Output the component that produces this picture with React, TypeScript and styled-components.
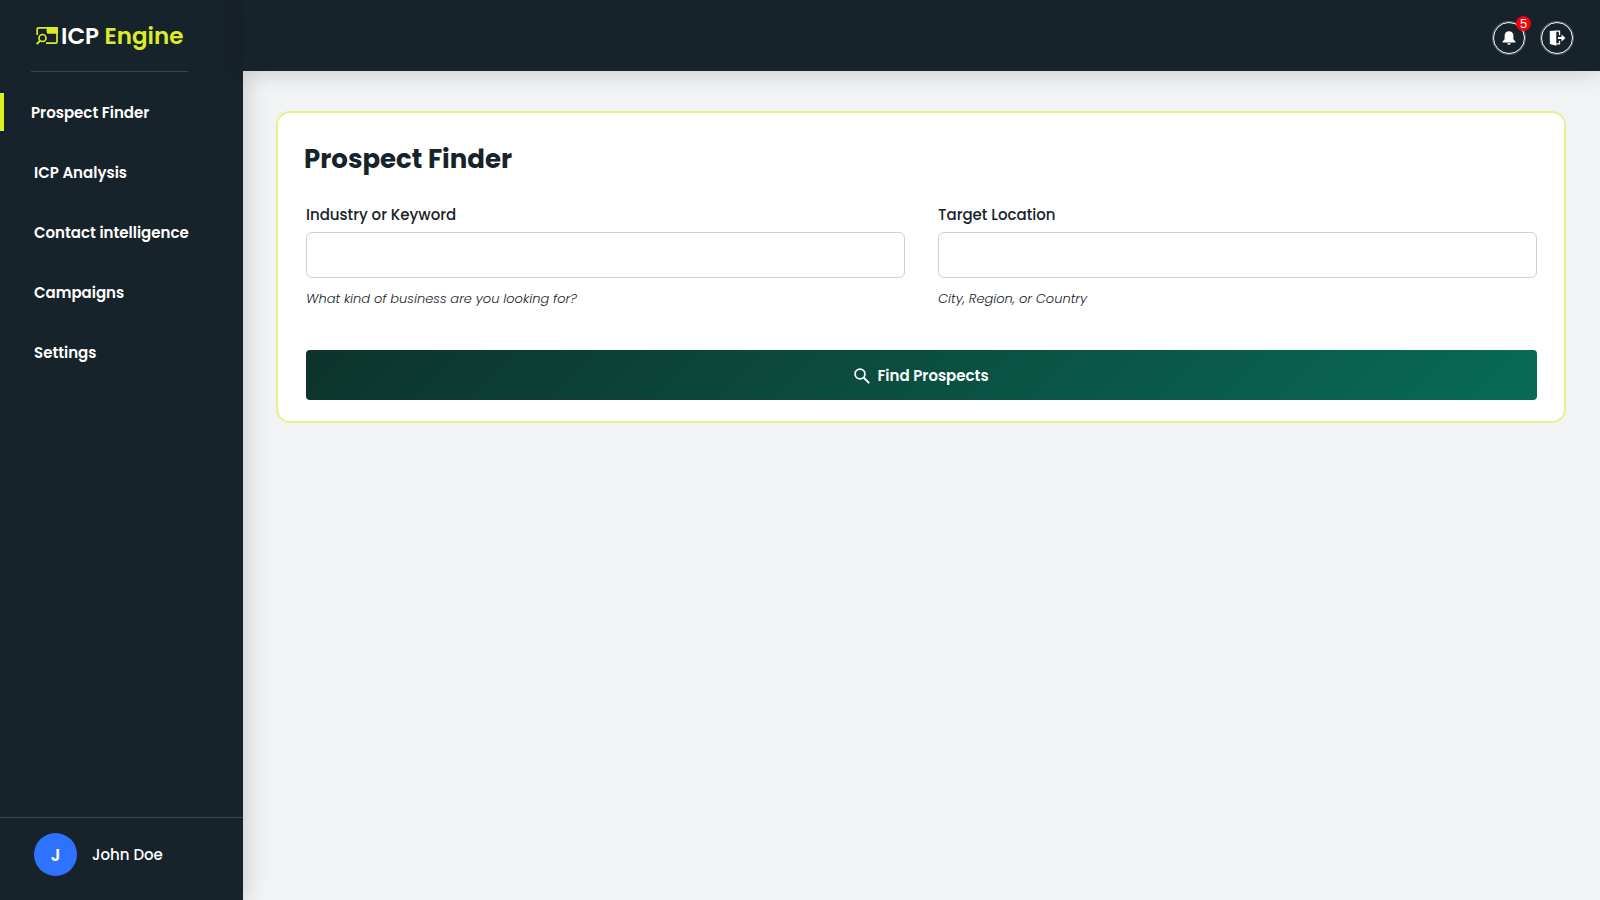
import React from "react";
import styled, { createGlobalStyle } from "styled-components";

const GlobalStyle = createGlobalStyle`
  *, *::before, *::after { box-sizing: border-box; }
  body {
    margin: 0;
    background: #f2f3f5;
    color: #17232a;
    font-family: Poppins, Inter, "Open Sans", sans-serif;
    font-size: 15px;
    line-height: 24px;
  }
  button, input { font: inherit; }
`;

const Shell = styled.div`
  display: grid;
  grid-template-columns: 243px minmax(0, 1fr);
  min-height: 100vh;
`;

const Sidebar = styled.aside`
  display: flex;
  flex-direction: column;
  background: #17232a;
  color: #fff;
  box-shadow: 0 0 24px rgba(0, 0, 0, 0.2);
`;

const Brand = styled.a`
  display: flex;
  align-items: center;
  gap: 3px;
  height: 72px;
  margin: 0 55px 0 31px;
  padding-left: 5px;
  border-bottom: 1px solid #3b454b;
  color: #fff;
  font-size: 23px;
  font-weight: 600;
  white-space: nowrap;
  text-decoration: none;

  span { color: #dcec2a; }
  svg { flex: none; }
`;

const Nav = styled.nav`
  display: flex;
  flex-direction: column;
  gap: 22px;
  padding-top: 21px;
`;

const NavLink = styled.a<{ $active?: boolean }>`
  display: flex;
  align-items: center;
  height: 38px;
  padding-top: 2px;
  padding-left: ${({ $active }) => ($active ? 27 : 34)}px;
  border-left: ${({ $active }) => ($active ? "4px solid #dcf01e" : "0")};
  color: #fff;
  font-weight: 600;
  text-decoration: none;
`;

const UserPanel = styled.div`
  display: flex;
  align-items: center;
  gap: 15px;
  height: 83px;
  margin-top: auto;
  padding: 0 34px 9px;
  border-top: 1px solid #3b454b;
  font-weight: 500;
`;

const Avatar = styled.span`
  display: grid;
  place-items: center;
  width: 43px;
  height: 43px;
  border-radius: 50%;
  background: #2f72ff;
  font-size: 17px;
  font-weight: 600;
`;

const Column = styled.div`
  display: flex;
  flex-direction: column;
`;

const Header = styled.header`
  display: flex;
  justify-content: flex-end;
  align-items: center;
  gap: 16px;
  height: 71px;
  padding: 5px 27px 0 0;
  background: #17232a;
  box-shadow: 0 0 24px rgba(0, 0, 0, 0.2);
`;

const RoundButton = styled.button`
  position: relative;
  display: grid;
  place-items: center;
  width: 32px;
  height: 32px;
  padding: 0;
  border: 1px solid #fff;
  border-radius: 50%;
  background: none;
  box-shadow: 0 0 0 1px rgba(255, 255, 255, 0.3);
  color: #fff;
`;

const Badge = styled.span`
  position: absolute;
  top: -7px;
  right: -7px;
  width: 15px;
  height: 15px;
  border-radius: 50%;
  background: #fb0007;
  font-family: "Liberation Sans", sans-serif;
  font-size: 13px;
  line-height: 15px;
  text-align: center;
`;

const Main = styled.main`
  padding: 40px 34px 40px 33px;
`;

const Card = styled.section`
  padding: 28px 27px 21px 26px;
  border: 2px solid #e8f08c;
  border-radius: 14px;
  background: #fff;
`;

const Title = styled.h1`
  margin: 0;
  font-size: 26px;
  line-height: 36px;
  font-weight: 700;
`;

const Form = styled.form`
  padding-left: 2px;
`;

const Fields = styled.div`
  display: grid;
  grid-template-columns: 1fr 1fr;
  gap: 33px;
  margin: 26px 0 39px;
`;

const Field = styled.div`
  display: flex;
  flex-direction: column;
`;

const Label = styled.label`
  font-weight: 500;
`;

const Input = styled.input`
  width: 100%;
  height: 46px;
  margin: 5px 0 9px;
  padding: 0 12px;
  border: 1px solid #cfcfcf;
  border-radius: 6px;
  background: #fff;
`;

const Hint = styled.span`
  font-size: 13px;
  line-height: 24px;
  font-style: italic;
  font-weight: 300;
`;

const SubmitButton = styled.button`
  display: flex;
  justify-content: center;
  align-items: center;
  gap: 7px;
  width: 100%;
  height: 50px;
  padding: 2px 6px 0;
  border: 0;
  border-radius: 4px;
  background: linear-gradient(135deg, #0d332b, #086b56);
  color: #fff;
  font-weight: 600;
`;

const NAV_ITEMS = ["Prospect Finder", "ICP Analysis", "Contact intelligence", "Campaigns", "Settings"];

const LogoIcon = () => (
  <svg width="22" height="18" viewBox="0 0 22 18" fill="none" stroke="#dcec2a" strokeWidth="1.7" aria-hidden="true">
    <path d="M1.2 8V2.200Q1.2.9 2.500.9H19.800Q21 .9 21 2.100V15Q21 16.200 19.800 16.200H10" />
    <path d="M11.500.9H21V6H12.500Q11.500 6 11.500 5Z" fill="#dcec2a" />
    <circle cx="6.500" cy="11" r="3.500" />
    <path d="M4 13.600.800 17.200" strokeWidth="2" />
  </svg>
);

const BellIcon = () => (
  <svg width="14" height="14" viewBox="0 0 14 14" fill="currentColor" aria-hidden="true">
    <path d="M7 .3C4.200.3 2.600 2.200 2.600 5v3.200L.6 10.500v1h12.800v-1l-2-2.300V5C11.400 2.200 9.800.3 7 .3Z" />
    <path d="M5.200 12.200h3.600Q8.500 13.700 7 13.700T5.200 12.200Z" />
  </svg>
);

const ExitIcon = () => (
  <svg width="17" height="16" viewBox="0 0 17 16" aria-hidden="true">
    <path d="M7 1.200h3.500v4M10.500 10.800v3H7" fill="none" stroke="currentColor" strokeWidth="1.300" />
    <path d="M.8 1 7.300.5v15.200L.8 14Z" fill="currentColor" />
    <path d="M9 7h3.500V4.600L16.500 8l-4 3.400V9H9Z" fill="currentColor" />
  </svg>
);

const SearchIcon = () => (
  <svg width="16" height="16" viewBox="0 0 16 16" fill="none" stroke="currentColor" strokeWidth="1.800" aria-hidden="true">
    <circle cx="6" cy="6" r="4.900" />
    <path d="m9.500 9.500 5.700 5.700" />
  </svg>
);

export default function App() {
  return (
    <>
      <GlobalStyle />
      <Shell>
        <Sidebar>
          <Brand href="#">
            <LogoIcon />
            <div>ICP <span>Engine</span></div>
          </Brand>
          <Nav>
            {NAV_ITEMS.map((item, i) => (
              <NavLink key={item} href="#" $active={i === 0}>{item}</NavLink>
            ))}
          </Nav>
          <UserPanel>
            <Avatar>J</Avatar>
            John Doe
          </UserPanel>
        </Sidebar>
        <Column>
          <Header>
            <RoundButton aria-label="Notifications">
              <BellIcon />
              <Badge>5</Badge>
            </RoundButton>
            <RoundButton aria-label="Log out">
              <ExitIcon />
            </RoundButton>
          </Header>
          <Main>
            <Card>
              <Title>Prospect Finder</Title>
              <Form>
                <Fields>
                  <Field>
                    <Label htmlFor="industry">Industry or Keyword</Label>
                    <Input id="industry" type="text" />
                    <Hint>What kind of business are you looking for?</Hint>
                  </Field>
                  <Field>
                    <Label htmlFor="location">Target Location</Label>
                    <Input id="location" type="text" />
                    <Hint>City, Region, or Country</Hint>
                  </Field>
                </Fields>
                <SubmitButton type="button">
                  <SearchIcon />
                  Find Prospects
                </SubmitButton>
              </Form>
            </Card>
          </Main>
        </Column>
      </Shell>
    </>
  );
}
